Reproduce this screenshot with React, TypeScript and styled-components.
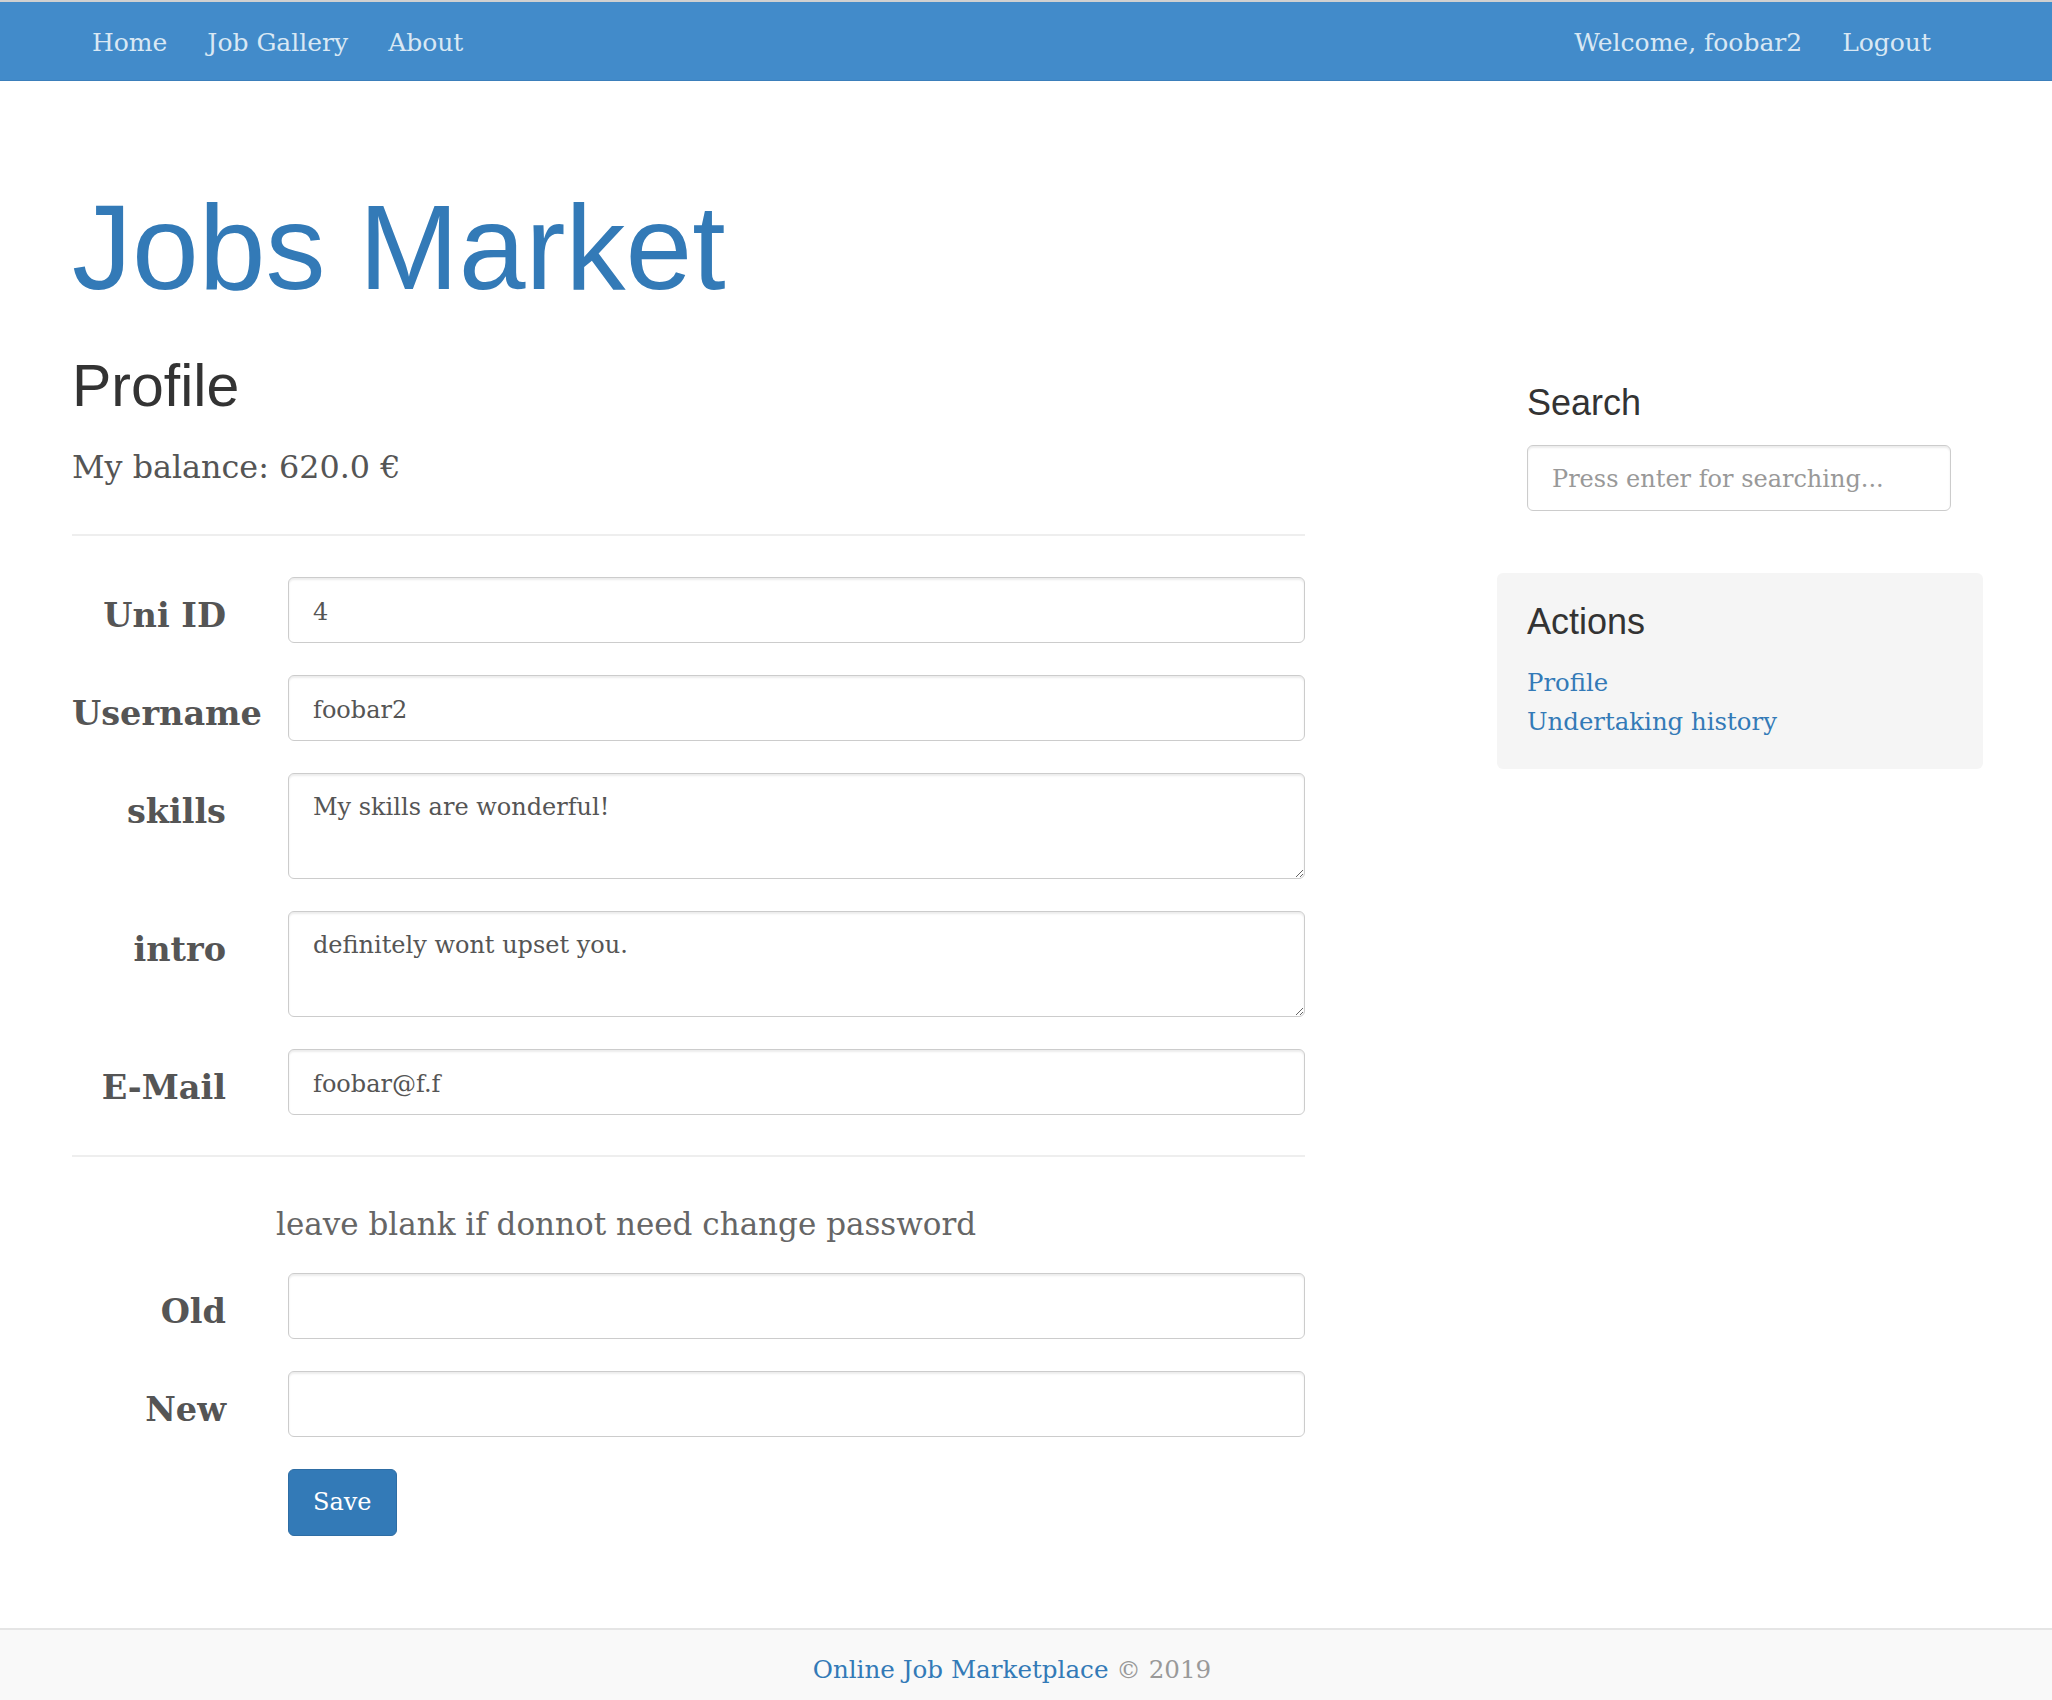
import styled, { createGlobalStyle } from "styled-components";

const GlobalStyle = createGlobalStyle`
  html, body {
    margin: 0;
    padding: 0;
    background: #fff;
  }
  body {
    font-family: "DejaVu Serif", Georgia, serif;
    color: #555;
  }
  * {
    box-sizing: border-box;
  }
`;

const serif = `"DejaVu Serif", Georgia, serif`;
const sans = `"Liberation Sans", Arial, Helvetica, sans-serif`;

type Field = { label: string; value: string; multiline?: boolean };

const profileFields: Field[] = [
  { label: "Uni ID", value: "4" },
  { label: "Username", value: "foobar2" },
  { label: "skills", value: "My skills are wonderful!", multiline: true },
  { label: "intro", value: "definitely wont upset you.", multiline: true },
  { label: "E-Mail", value: "foobar@f.f" },
];

export default function App() {
  return (
    <Page>
      <GlobalStyle />
      <NavBar>
        <NavGroup>
          <NavLink href="#">Home</NavLink>
          <NavLink href="#">Job Gallery</NavLink>
          <NavLink href="#">About</NavLink>
        </NavGroup>
        <NavGroup>
          <NavLink href="#">Welcome, foobar2</NavLink>
          <NavLink href="#">Logout</NavLink>
        </NavGroup>
      </NavBar>

      <Container>
        <Title>Jobs Market</Title>
        <Row>
          <MainCol>
            <PageHeading>Profile</PageHeading>
            <Balance>My balance: 620.0 €</Balance>
            <Divider />
            <Form>
              {profileFields.map((f) => (
                <FormRow key={f.label}>
                  <Label>{f.label}</Label>
                  {f.multiline ? (
                    <TextArea defaultValue={f.value} />
                  ) : (
                    <TextInput type="text" defaultValue={f.value} />
                  )}
                </FormRow>
              ))}
            </Form>
            <Divider $top={40} />
            <Hint>leave blank if donnot need change password</Hint>
            <FormRow>
              <Label>Old</Label>
              <TextInput type="password" />
            </FormRow>
            <FormRow>
              <Label>New</Label>
              <TextInput type="password" />
            </FormRow>
            <FormRow>
              <Label />
              <SaveButton type="button">Save</SaveButton>
            </FormRow>
          </MainCol>

          <Sidebar>
            <Module>
              <ModuleTitle>Search</ModuleTitle>
              <SearchInput type="text" placeholder="Press enter for searching..." />
            </Module>
            <InsetModule>
              <ModuleTitle>Actions</ModuleTitle>
              <LinkList>
                <li>
                  <SideLink href="#">Profile</SideLink>
                </li>
                <li>
                  <SideLink href="#">Undertaking history</SideLink>
                </li>
              </LinkList>
            </InsetModule>
          </Sidebar>
        </Row>
      </Container>

      <Footer>
        <FooterLink href="#">Online Job Marketplace</FooterLink> © 2019
      </Footer>
    </Page>
  );
}

const Page = styled.div`
  min-height: 100vh;
  display: flex;
  flex-direction: column;
`;

const NavBar = styled.nav`
  height: 81px;
  border-top: 2px solid #d0d0d0;
  border-bottom: 1px solid #3b7fbb;
  background: #428bca;
  display: flex;
  align-items: center;
  justify-content: space-between;
  padding: 3px 121px 0 92px;
`;

const NavGroup = styled.div`
  display: flex;
  align-items: center;
  gap: 40px;
`;

const NavLink = styled.a`
  font-family: ${serif};
  font-size: 25px;
  color: #d9e8f4;
  text-decoration: none;
`;

const Container = styled.main`
  padding: 100px 0 0 72px;
`;

const Title = styled.h1`
  margin: 0;
  font-family: ${sans};
  font-weight: 400;
  font-size: 120px;
  line-height: 133px;
  color: #337ab7;
`;

const Row = styled.div`
  display: flex;
  align-items: flex-start;
  margin-top: 40px;
`;

const MainCol = styled.section`
  width: 1233px;
`;

const PageHeading = styled.h2`
  margin: 0;
  font-family: ${sans};
  font-weight: 400;
  font-size: 59px;
  line-height: 1.1;
  color: #333;
`;

const Balance = styled.p`
  margin: 26px 0 0;
  font-size: 31.8px;
  line-height: 1.4;
  color: #555;
`;

const Divider = styled.hr<{ $top?: number }>`
  margin: ${(p) => p.$top ?? 45}px 0 0;
  border: 0;
  border-top: 2px solid #eee;
`;

const Form = styled.div`
  margin-top: 41px;
`;

const FormRow = styled.div`
  display: flex;
  gap: 62px;
  margin-bottom: 32px;
`;

const Label = styled.label`
  flex: 0 0 154px;
  min-width: 0;
  text-align: right;
  white-space: nowrap;
  padding-top: 16px;
  font-family: ${serif};
  font-weight: 700;
  font-size: 33.5px;
  line-height: 1.4;
  color: #555;
`;

const fieldBase = `
  flex: 1;
  border: 1px solid #ccc;
  border-radius: 6px;
  box-shadow: inset 0 2px 2px rgba(0, 0, 0, 0.075);
  background: #fff;
  font-family: "DejaVu Serif", Georgia, serif;
  font-size: 24px;
  color: #555;
  outline: none;
`;

const TextInput = styled.input`
  ${fieldBase}
  height: 66px;
  padding: 3px 24px 0;
`;

const TextArea = styled.textarea`
  ${fieldBase}
  height: 106px;
  padding: 16px 24px 0;
  line-height: 34px;
  resize: vertical;
`;

const Hint = styled.p`
  margin: 46px 0 26px 204px;
  font-size: 31px;
  line-height: 1.4;
  color: #666;
`;

const SaveButton = styled.button`
  height: 67px;
  padding: 0 24px;
  border: 1px solid #2e6da4;
  border-radius: 6px;
  background: #337ab7;
  color: #fff;
  font-family: ${serif};
  font-size: 24px;
  cursor: pointer;
`;

const Sidebar = styled.aside`
  width: 486px;
  margin-left: 192px;
`;

const Module = styled.div`
  padding: 29px 32px 0 30px;
`;

const InsetModule = styled.div`
  margin-top: 62px;
  padding: 29px 30px 28px;
  background: #f5f5f5;
  border-radius: 6px;
`;

const ModuleTitle = styled.h3`
  margin: 0;
  font-family: ${sans};
  font-weight: 400;
  font-size: 36px;
  line-height: 1.1;
  color: #333;
`;

const SearchInput = styled.input`
  ${fieldBase}
  display: block;
  width: 100%;
  margin-top: 22px;
  height: 66px;
  padding: 3px 24px 0;
  &::placeholder {
    color: #999;
  }
`;

const LinkList = styled.ul`
  list-style: none;
  margin: 22px 0 0;
  padding: 0;
`;

const SideLink = styled.a`
  font-family: ${serif};
  font-size: 24.4px;
  line-height: 39px;
  color: #337ab7;
  text-decoration: none;
`;

const Footer = styled.footer`
  margin-top: auto;
  height: 72px;
  padding: 23px 28px 0 0;
  border-top: 2px solid #e5e5e5;
  background: #f9f9f9;
  text-align: center;
  font-family: ${serif};
  font-size: 24.6px;
  line-height: 1.4;
  color: #999;
`;

const FooterLink = styled.a`
  color: #337ab7;
  text-decoration: none;
`;
